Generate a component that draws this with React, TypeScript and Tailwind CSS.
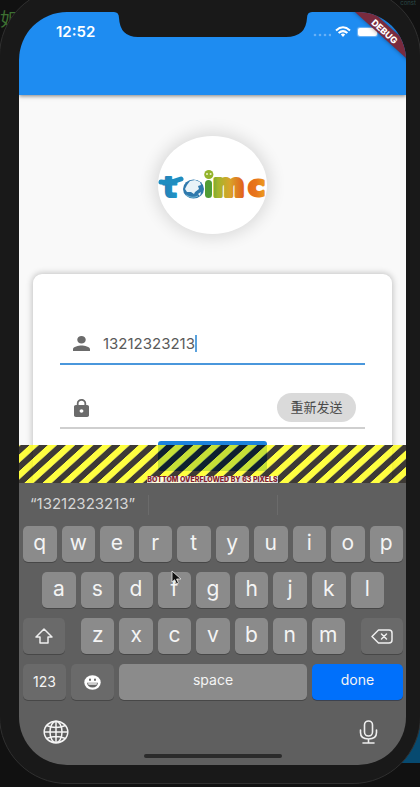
import React from "react";

const ROW_ONE = ["q", "w", "e", "r", "t", "y", "u", "i", "o", "p"];
const ROW_TWO = ["a", "s", "d", "f", "g", "h", "j", "k", "l"];
const ROW_THREE = ["z", "x", "c", "v", "b", "n", "m"];

function Key({ label }: { label: string }) {
  return (
    <button className="flex h-9 min-w-0 flex-1 items-center justify-center rounded-[5px] bg-[#8b8b8b] pb-1 text-[21px] leading-none text-[#f4f4f4] shadow-[0_1px_0_#474747]">
      {label}
    </button>
  );
}

function Logo() {
  return (
    <svg viewBox="0 0 109 98" className="h-full w-full overflow-visible" role="img" aria-label="toimc">
      <defs>
        <linearGradient id="logoFill" gradientUnits="userSpaceOnUse" x1="0" y1="0" x2="109" y2="0">
          <stop offset="0" stopColor="#2a76ae" />
          <stop offset="0.2" stopColor="#1d9acb" />
          <stop offset="0.4" stopColor="#2c7f9a" />
          <stop offset="0.46" stopColor="#4c9a3c" />
          <stop offset="0.55" stopColor="#a3b52c" />
          <stop offset="0.66" stopColor="#d9a32a" />
          <stop offset="0.78" stopColor="#e2631c" />
          <stop offset="0.9" stopColor="#e8761c" />
          <stop offset="1" stopColor="#eda51f" />
        </linearGradient>
      </defs>
      <g
        fill="url(#logoFill)"
        stroke="url(#logoFill)"
        strokeLinejoin="round"
        fontFamily="'DejaVu Sans', Inter, sans-serif"
        fontWeight="700"
      >
        <text x="5" y="61" fontSize="29" strokeWidth="2">t</text>
        <text x="55" y="60" fontSize="30" strokeWidth="4">m</text>
        <text x="90" y="60" fontSize="29" strokeWidth="3">c</text>
      </g>
      <path d="M3 46c7 1 13 0 20-3" fill="none" stroke="#1f8dc0" strokeWidth="5" strokeLinecap="round" />
      <ellipse cx="35.5" cy="53" rx="10.5" ry="9.5" fill="#2f79ad" />
      <path d="M29 49l3-4 5-1 5 2 1 3-3 1 1 3-4 3-1 2-3-2-4 0-2-3z" fill="#e9f3f8" />
      <path d="M40 58l3-2-1 4z" fill="#e9f3f8" />
      <path d="M28 59q6 4 12 1" stroke="#74b8d4" fill="none" />
      <rect x="47" y="44" width="7" height="18" rx="3.5" fill="#509c35" />
      <circle cx="50.8" cy="38.5" r="4.6" fill="#94b42c" />
      <circle cx="49" cy="38" r="1" fill="#eef3cc" />
      <circle cx="52.6" cy="38" r="1" fill="#eef3cc" />
    </svg>
  );
}

function StatusBar() {
  return (
    <div className="flex items-center justify-between pl-[37px] pr-[29px] pt-3">
      <span className="text-[15px] font-semibold leading-4 text-white">12:52</span>
      <div className="flex items-center">
        <svg width="18" height="12" viewBox="0 0 18 12" fill="#69b0f5" className="mr-1">
          <circle cx="2" cy="9" r="1.3" />
          <circle cx="7" cy="9" r="1.3" />
          <circle cx="12" cy="9" r="1.3" />
          <circle cx="17" cy="9" r="1.3" />
        </svg>
        <svg width="16" height="12" viewBox="0 0 16 12" fill="none" stroke="#fff" strokeWidth="2">
          <path d="M1 4.4Q8-1.8 15 4.4M3.600 7Q8 3.200 12.400 7" />
          <path d="M5.800 8.600Q8 6.600 10.200 8.600L8 11z" fill="#fff" stroke="none" />
        </svg>
        <span className="ml-[7px] h-2 w-[19px] rounded-xs bg-white shadow-[0_0_1px_1px_#73b7f7]" />
      </div>
    </div>
  );
}

function OverflowStripes() {
  return (
    <div className="absolute inset-x-0 bottom-0 h-[38px]">
      <svg width="100%" height="38" className="block">
        <defs>
          <pattern
            id="hazard"
            width="18.2"
            height="38"
            patternUnits="userSpaceOnUse"
            patternTransform="translate(47 0) skewX(-47.7)"
          >
            <rect x="0" width="9.3" height="38" fill="#ffff00" fillOpacity="0.75" />
            <rect x="9.3" width="8.9" height="38" fill="#0a0500" fillOpacity="0.79" />
          </pattern>
        </defs>
        <rect width="100%" height="38" fill="url(#hazard)" />
      </svg>
      <div className="absolute inset-x-0 bottom-0 flex justify-center">
        <span className="whitespace-nowrap bg-white/80 text-[7px] font-extrabold leading-[7px] text-[#851c2c]">
          BOTTOM OVERFLOWED BY 63 PIXELS
        </span>
      </div>
    </div>
  );
}

function LoginPage() {
  return (
    <main className="relative overflow-hidden bg-[#f9f9f9] px-[14px] pt-[41px]">
      <div className="mx-auto h-[98px] w-[109px] rounded-[50%] bg-white shadow-[0_0_16px_4px_rgba(0,0,0,0.12)]">
        <Logo />
      </div>
      <form
        className="mt-10 rounded-t-[9px] bg-white px-[27px] pb-3 pt-[50px] shadow-[0_0_6px_1px_rgba(0,0,0,0.22)]"
        onSubmit={(e) => e.preventDefault()}
      >
        <div className="flex h-[41px] items-center border-b-2 border-[#4a97dc] pl-[13px]">
          <label htmlFor="phone" aria-label="Phone">
            <svg width="17" height="15" viewBox="4 4 16 16" preserveAspectRatio="none" fill="#6b6b6b">
              <path d="M12 12c2.210 0 4-1.790 4-4s-1.790-4-4-4-4 1.790-4 4 1.790 4 4 4zm0 2c-2.670 0-8 1.340-8 4v2h16v-2c0-2.660-5.330-4-8-4z" />
            </svg>
          </label>
          <div className="ml-[13px] flex min-w-0 flex-1 items-center">
            <input
              id="phone"
              defaultValue="13212323213"
              className="h-5 w-[92px] bg-transparent p-0 text-[15px] leading-5 text-[#5a5a5a] outline-none"
            />
            <span className="h-[17px] w-[2px] bg-[#5aa2dd]" />
          </div>
        </div>
        <div className="mt-[23px] flex h-[41px] items-center border-b-2 border-[#cfcfcf] pl-[14px] pr-[9px]">
          <label htmlFor="code" aria-label="Code">
            <svg width="15" height="18" viewBox="4 1 16 21" preserveAspectRatio="none" fill="#6b6b6b">
              <path d="M18 8h-1V6c0-2.760-2.240-5-5-5S7 3.240 7 6v2H6c-1.100 0-2 .9-2 2v10c0 1.100.9 2 2 2h12c1.100 0 2-.9 2-2V10c0-1.100-.9-2-2-2zm-6 9c-1.100 0-2-.9-2-2s.9-2 2-2 2 .9 2 2-.9 2-2 2zm3.100-9H8.900V6c0-1.710 1.390-3.100 3.100-3.100s3.100 1.390 3.100 3.100v2z" />
            </svg>
          </label>
          <input id="code" className="ml-[14px] h-5 min-w-0 flex-1 bg-transparent p-0 text-[15px] outline-none" />
          <button
            type="button"
            className="h-[29px] w-[79px] shrink-0 rounded-full bg-[#dadada] text-[13px] leading-none text-[#4a4a4a]"
          >
            重新发送
          </button>
        </div>
        <button type="submit" aria-label="Login" className="mx-auto mt-3 block h-[30px] w-[109px] rounded-[3px] bg-[#1d83dc]" />
      </form>
      <OverflowStripes />
    </main>
  );
}

function Keyboard() {
  return (
    <section className="bg-[#5f5f5f] pl-1 pr-[3px] text-[#f4f4f4]">
      <div className="flex h-[43px] items-center text-[15px] text-[#d6d6d6]">
        <span className="w-[125px] pl-[7px]">“13212323213”</span>
        <span className="h-5 w-px bg-[#6b6b6b]" />
        <span className="flex-1" />
        <span className="mr-[125px] h-5 w-px bg-[#6b6b6b]" />
      </div>
      <div className="flex flex-col gap-[10px]">
        <div className="flex gap-[5px]">
          {ROW_ONE.map((k) => (
            <Key key={k} label={k} />
          ))}
        </div>
        <div className="flex gap-[5px] px-[19px]">
          {ROW_TWO.map((k) => (
            <Key key={k} label={k} />
          ))}
        </div>
        <div className="flex justify-between">
          <button
            aria-label="shift"
            className="flex h-9 w-[42px] items-center justify-center rounded-[5px] bg-[#6a6a6a] shadow-[0_1px_0_#474747]"
          >
            <svg width="18" height="16" viewBox="0 0 18 16" fill="none" stroke="#eee" strokeWidth="1.5" strokeLinejoin="round">
              <path d="M9 1L1 9h4v6h8V9h4z" />
            </svg>
          </button>
          <div className="mx-4 flex min-w-0 flex-1 gap-[5px]">
            {ROW_THREE.map((k) => (
              <Key key={k} label={k} />
            ))}
          </div>
          <button
            aria-label="delete"
            className="flex h-9 w-[42px] items-center justify-center rounded-[5px] bg-[#6a6a6a] shadow-[0_1px_0_#474747]"
          >
            <svg width="22" height="15" viewBox="0 0 22 15" fill="none" stroke="#eee" strokeWidth="1.5" strokeLinejoin="round" strokeLinecap="round">
              <path d="M7.500 1H18q3 0 3 3v7q0 3-3 3H7.500L1 7.500z" />
              <path d="M10.500 5l5 5M15.500 5l-5 5" />
            </svg>
          </button>
        </div>
        <div className="flex gap-[5px] text-[14px] leading-none">
          <button className="h-9 w-[43px] rounded-[5px] bg-[#6a6a6a] shadow-[0_1px_0_#474747]">123</button>
          <button
            aria-label="emoji"
            className="flex h-9 w-[43px] items-center justify-center rounded-[5px] bg-[#6a6a6a] shadow-[0_1px_0_#474747]"
          >
            <svg width="17" height="15" viewBox="0 0 17 15">
              <ellipse cx="8.500" cy="7.500" rx="8.200" ry="7.300" fill="#fff" />
              <ellipse cx="6" cy="4.800" rx="0.900" ry="1.300" fill="#555" />
              <ellipse cx="11" cy="4.800" rx="0.900" ry="1.300" fill="#555" />
              <path d="M3 7.700h11q-.7 4.800-5.500 4.800T3 7.700z" fill="#666" />
              <path d="M4 8.300h9l-.5 1.500h-8z" fill="#eee" />
            </svg>
          </button>
          <button className="h-9 flex-1 rounded-[5px] bg-[#8b8b8b] pb-1 shadow-[0_1px_0_#474747]">space</button>
          <button className="h-9 w-[91px] rounded-[5px] bg-[#0070fb] pb-1 shadow-[0_1px_0_#3c4250]">done</button>
        </div>
      </div>
      <div className="flex items-center justify-between pl-5 pr-[25px] pt-5">
        <button aria-label="globe">
          <svg width="26" height="24" viewBox="0 0 26 24" fill="none" stroke="#f4f4f4" strokeWidth="1.500">
            <ellipse cx="13" cy="12" rx="11.800" ry="10.800" />
            <ellipse cx="13" cy="12" rx="6" ry="10.800" />
            <path d="M13 1v22M1 12h24M3.500 5.500q9.500 4 19 0M3.500 18.500q9.500-4 19 0" />
          </svg>
        </button>
        <button aria-label="dictate">
          <svg width="19" height="24" viewBox="0 0 19 24" fill="none" stroke="#eee" strokeWidth="1.600" strokeLinecap="round">
            <rect x="5.500" y="1" width="8" height="15" rx="4" />
            <path d="M1.500 10v2.500q0 6.500 8 6.500t8-6.500V10M9.500 19v4M4 23h11" />
          </svg>
        </button>
      </div>
      <div className="flex justify-center pb-[7px] pt-[10px]">
        <span className="h-1 w-[138px] rounded-full bg-[#2b2b2b]" />
      </div>
    </section>
  );
}

export default function App() {
  return (
    <div
      className="relative min-h-screen overflow-hidden bg-[#111111]"
      style={{ fontFamily: "Inter, 'Liberation Sans', 'Noto Sans CJK SC', sans-serif" }}
    >
      <span className="absolute left-0 top-2 text-[18px] leading-6 text-[#3d7032]">如</span>
      <span className="absolute right-1 top-0 text-[6px] leading-[6px] text-[#2c4a47]">const</span>
      <div className="absolute bottom-6 right-0 h-10 w-6 bg-[#074a70]" />
      <div className="relative -mx-px -mt-3 rounded-[68px] border border-[#303030] bg-[#191919] pb-[18px] pl-[19px] pr-[14px] pt-[23px]">
        <div className="relative overflow-hidden rounded-[48px]">
          <header className="relative z-10 h-[83px] bg-[#1e8cf1] shadow-[0_1px_4px_rgba(0,0,0,0.5)]">
            <StatusBar />
            <div className="absolute inset-x-0 top-0 flex justify-center">
              <svg width="198" height="25" viewBox="0 0 198 25" fill="#191919">
                <path d="M0 0Q5 0 5 6Q6 25 24 25H172Q192 25 193 6Q193 0 198 0z" />
              </svg>
            </div>
            <span className="absolute -right-6 top-[13px] flex h-3 w-[90px] rotate-[42deg] items-center justify-center bg-[#792b3e] text-[9px] font-extrabold leading-none text-white shadow-[0_0_4px_rgba(0,0,0,0.4)]">
              DEBUG
            </span>
          </header>
          <LoginPage />
          <Keyboard />
          <svg
            width="12"
            height="16"
            viewBox="0 0 12 16"
            className="absolute left-[152px] top-[558px]"
            aria-hidden="true"
          >
            <path d="M1 1v11l2.600-2.300L5.500 14l2-.9-1.900-4.100H10z" fill="#111" stroke="#ddd" strokeWidth="0.900" />
          </svg>
        </div>
      </div>
    </div>
  );
}
